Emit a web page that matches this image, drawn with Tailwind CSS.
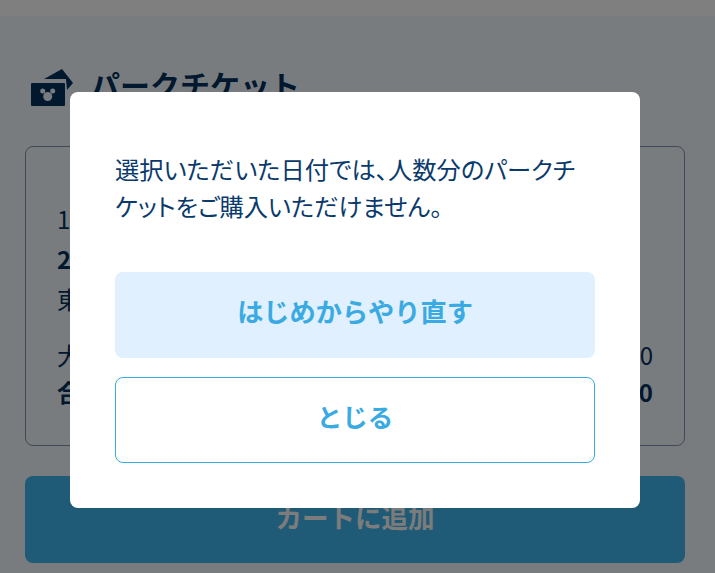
<!DOCTYPE html>
<html lang="ja">
<head>
  <meta charset="UTF-8">
  <title>パークチケット</title>
  <script src="https://cdn.jsdelivr.net/npm/@tailwindcss/browser@4"></script>
</head>
<body class="relative h-[573px] overflow-hidden bg-[#f2f8ff] font-['Noto_Sans_CJK_JP','Noto_Sans',sans-serif] text-[#0a3a6b]">

  <!-- Page behind the dialog -->
  <div class="h-4 bg-white"></div>
  <div class="pl-[25px] pr-[30px]">
    <div class="flex h-[130px] items-start gap-[17px] pl-[6px] pt-[46px]">
      <svg class="mt-[7px] h-[37px] w-[42px] shrink-0" viewBox="0 0 42 37" fill="#02305c">
        <path d="M13 10 L31 0 L42 14 L36 21 L35 10 Z"/>
        <path d="M1 14 H33 a1 1 0 0 1 1 1 V36 a1 1 0 0 1 -1 1 H1 a1 1 0 0 1 -1 -1 V15 a1 1 0 0 1 1 -1 Z"/>
        <g fill="#f2f8ff">
          <circle cx="11.700" cy="22" r="2.500"/>
          <circle cx="21.700" cy="22" r="2.500"/>
          <circle cx="16.700" cy="27.500" r="4.500"/>
        </g>
      </svg>
      <h1 class="text-[30px] font-bold leading-[44px] text-[#02305c]">パークチケット</h1>
    </div>

    <div class="h-[300px] rounded-lg border border-[#7f93b2] px-[31px] pt-[52px] text-[24px] leading-[40px] text-[#02305c]">
      <p>1</p>
      <p class="font-bold">2</p>
      <p>東</p>
      <div class="mt-[17px] flex justify-between leading-[37px]">
        <span>大</span>
        <span>0</span>
      </div>
      <div class="flex justify-between font-bold leading-[37px]">
        <span>合</span>
        <span>0</span>
      </div>
    </div>

    <button class="mt-[30px] flex h-[87px] w-full items-center justify-center rounded-lg bg-[#3eb4ec] pb-[6px] text-[26.5px] font-bold text-[#f8f8f8]">カートに追加</button>
  </div>

  <!-- Dim layer -->
  <div class="absolute inset-0 bg-black/50"></div>

  <!-- Dialog -->
  <div class="absolute left-[70px] top-[92px] h-[416px] w-[570px] rounded-lg bg-white px-[45px] pt-[58px]">
    <p class="text-[24.3px] leading-[37px] [font-feature-settings:'palt']">選択いただいた日付では、人数分のパークチケットをご購入いただけません。</p>
    <button class="mt-[48px] flex h-[86px] w-full items-center justify-center rounded-lg bg-[#e1f0ff] pb-[7px] text-[26.2px] font-bold text-[#3aaae2]">はじめからやり直す</button>
    <button class="mt-[19px] flex h-[86px] w-full items-center justify-center rounded-lg border border-[#3aaae2] bg-white pb-[8px] text-[25.5px] font-bold text-[#3aaae2]">とじる</button>
  </div>
</body>
</html>
